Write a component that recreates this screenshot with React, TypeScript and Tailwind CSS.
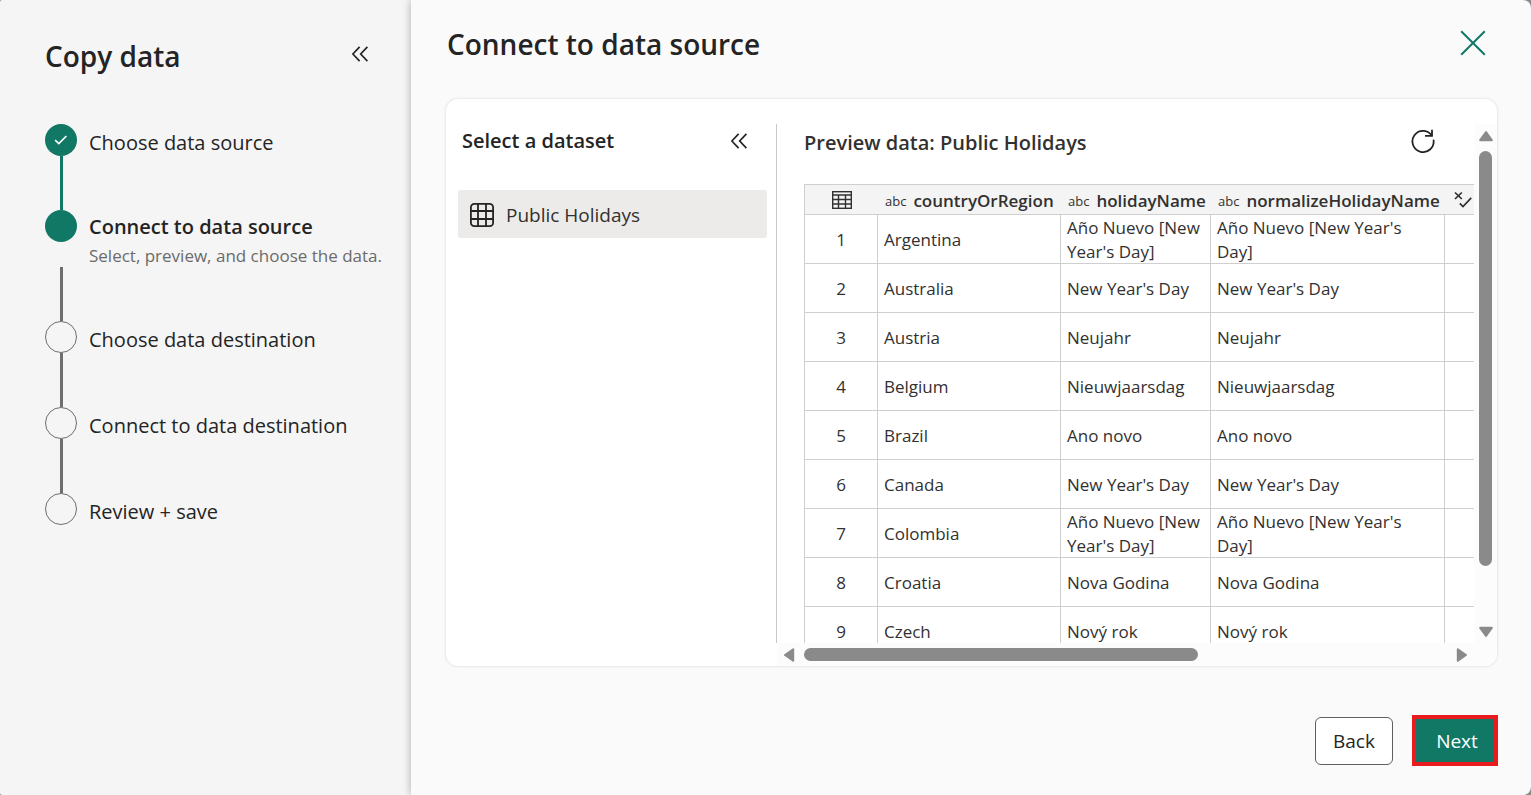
import React from "react";

type StepState = "done" | "current" | "todo";

const steps: { label: string; detail?: string; state: StepState }[] = [
  { label: "Choose data source", state: "done" },
  {
    label: "Connect to data source",
    detail: "Select, preview, and choose the data.",
    state: "current",
  },
  { label: "Choose data destination", state: "todo" },
  { label: "Connect to data destination", state: "todo" },
  { label: "Review + save", state: "todo" },
];

const rows: [string, string][] = [
  ["Argentina", "Año Nuevo [New Year's Day]"],
  ["Australia", "New Year's Day"],
  ["Austria", "Neujahr"],
  ["Belgium", "Nieuwjaarsdag"],
  ["Brazil", "Ano novo"],
  ["Canada", "New Year's Day"],
  ["Colombia", "Año Nuevo [New Year's Day]"],
  ["Croatia", "Nova Godina"],
  ["Czech", "Nový rok"],
];

function CollapseIcon() {
  return (
    <svg className="h-4 w-4" viewBox="0 0 16 16" fill="none" stroke="currentColor" strokeWidth="1.7">
      <path d="M7.6.9.9 8l6.7 7.1M15.4.9 8.7 8l6.7 7.1" />
    </svg>
  );
}

function DatasetIcon() {
  return (
    <svg className="h-6 w-6" viewBox="0 0 24 24" fill="none" stroke="#242424" strokeWidth="1.8">
      <rect x="0.9" y="0.9" width="22.2" height="22.2" rx="3.4" />
      <path d="M8 1v22M16 1v22M1 8h22M1 16h22" />
    </svg>
  );
}

function TableIcon() {
  return (
    <svg className="mx-auto h-[18px] w-5" viewBox="0 0 20 18" fill="none" stroke="currentColor">
      <rect x="0.7" y="0.7" width="18.6" height="16.6" strokeWidth="1.4" />
      <path d="M0 4h20M0 8.5h20M0 13h20M6.5 4v14M13.5 4v14" strokeWidth="1.4" />
    </svg>
  );
}

function RefreshIcon() {
  return (
    <svg className="h-6 w-6" viewBox="0 0 24 24" fill="none" stroke="currentColor" strokeWidth="1.8">
      <path d="M20.6 6.2A10.6 10.6 0 1 0 22.6 11.4" strokeLinecap="round" />
      <path d="M21 .8v6h-7" />
    </svg>
  );
}

function BooleanIcon() {
  return (
    <svg className="h-[18px] w-[18px]" viewBox="0 0 18 18" fill="none" stroke="currentColor" strokeWidth="1.7">
      <path d="M1 1.5 7.8 8M7.8 1.5 1 8M5.8 12.4l3.2 3.1 8.2-8.7" />
    </svg>
  );
}

function Arrow({ direction }: { direction: "up" | "down" | "left" | "right" }) {
  const turn = {
    up: "rotate-0",
    down: "rotate-180",
    left: "-rotate-90",
    right: "rotate-90",
  }[direction];
  return (
    <svg className={`h-[14px] w-[14px] shrink-0 ${turn}`} viewBox="0 0 14 14" fill="#8a8a8a" stroke="#8a8a8a" strokeWidth="2" strokeLinejoin="round">
      <path d="M7 3 12.8 11.2H1.2Z" />
    </svg>
  );
}

function StepMarker({ state }: { state: StepState }) {
  if (state === "todo") {
    return <span className="h-8 w-8 shrink-0 rounded-full border border-[#6e6e6e]" />;
  }
  return (
    <span className="flex h-8 w-8 shrink-0 items-center justify-center rounded-full bg-[#117865] text-white">
      {state === "done" && (
        <svg className="h-[10px] w-[14px]" viewBox="0 0 14 10" fill="none" stroke="currentColor" strokeWidth="1.6">
          <path d="M1.2 5.2 4.8 8.6 12.4 1" />
        </svg>
      )}
    </span>
  );
}

function Sidebar() {
  return (
    <aside className="w-[411px] shrink-0 bg-[#f5f5f5] pt-9 pl-[45px]">
      <div className="flex items-start justify-between pr-[43px]">
        <h1 className="text-[28px] leading-10 font-semibold">Copy data</h1>
        <button type="button" aria-label="Collapse steps" className="mt-[10px]">
          <CollapseIcon />
        </button>
      </div>
      <ol className="mt-12">
        {steps.map((step, index) => (
          <li key={step.label} className="flex gap-3">
            <div className="flex flex-col items-center">
              <StepMarker state={step.state} />
              {index < steps.length - 1 && (
                <span
                  className={`h-[54px] w-[3px] ${step.state === "done" ? "bg-[#117865]" : "bg-[#6e6e6e]"} ${step.detail ? "mt-[25px]" : ""}`}
                />
              )}
            </div>
            <div className="whitespace-nowrap">
              <p className={step.detail ? "pt-[1px] text-[20px] leading-8 font-semibold" : "pt-[3px] text-[20px] leading-8"}>
                {step.label}
              </p>
              {step.detail && <p className="pt-[1px] text-[17px] leading-6 text-[#6b6b6b]">{step.detail}</p>}
            </div>
          </li>
        ))}
      </ol>
    </aside>
  );
}

function PreviewTable() {
  const headers = ["countryOrRegion", "holidayName", "normalizeHolidayName"];
  return (
    <table className="w-[762px] table-fixed border-separate border-spacing-0 border-t border-l border-[#cfcfcf] text-left text-[17px] leading-6 text-[#323130]">
      <colgroup>
        <col className="w-[73px]" />
        <col className="w-[183px]" />
        <col className="w-[150px]" />
        <col className="w-[234px]" />
        <col />
      </colgroup>
      <thead>
        <tr className="h-[30px] bg-[#f4f4f4]">
          <th className="border-b border-[#cfcfcf] p-0" aria-label="Row">
            <TableIcon />
          </th>
          {headers.map((name) => (
            <th key={name} className="border-b border-[#cfcfcf] p-0 pt-[2px] pl-[7px] font-semibold whitespace-nowrap">
              <span className="mr-[7px] align-[1px] text-[13px] leading-4 font-normal">abc</span>
              {name}
            </th>
          ))}
          <th className="border-b border-[#cfcfcf] p-0 pl-[9px]" aria-label="True or false">
            <BooleanIcon />
          </th>
        </tr>
      </thead>
      <tbody>
        {rows.map(([country, holiday], index) => (
          <tr key={country} className="h-[49px] *:border-b *:border-[#cfcfcf] *:p-0 *:not-last:border-r">
            <td className="text-center">
              <div className="mt-[1px] -mb-[1px]">{index + 1}</div>
            </td>
            <td>
              <div className="mt-[1px] -mb-[1px] pl-[6px]">{country}</div>
            </td>
            <td>
              <div className="mt-[1px] -mb-[1px] pl-[6px]">{holiday}</div>
            </td>
            <td>
              <div className="mt-[1px] -mb-[1px] pr-6 pl-[6px]">{holiday}</div>
            </td>
            <td />
          </tr>
        ))}
      </tbody>
    </table>
  );
}

function DatasetPane() {
  return (
    <div className="flex w-[330px] shrink-0 flex-col pt-[26px] pr-[9px] pl-3">
      <div className="flex items-center justify-between pr-5 pl-1">
        <h3 className="text-[20px] leading-8 font-semibold">Select a dataset</h3>
        <button type="button" aria-label="Collapse datasets">
          <CollapseIcon />
        </button>
      </div>
      <button type="button" className="mt-[33px] flex h-12 items-center gap-3 rounded-[3px] bg-[#edebe9] pt-[2px] pl-3 text-[19px] text-[#323130]">
        <DatasetIcon />
        Public Holidays
      </button>
    </div>
  );
}

function PreviewPane() {
  return (
    <div className="mt-[25px] flex min-w-0 flex-1 flex-col">
      <div className="flex min-h-0 flex-1">
        <div className="min-w-0 flex-1 overflow-hidden border-l border-[#c8c8c8] pl-[27px]">
          <div className="flex items-start justify-between pr-[39px]">
            <h3 className="pt-[3px] text-[20px] leading-8 font-semibold text-[#323130]">Preview data: Public Holidays</h3>
            <button type="button" aria-label="Refresh preview" className="mt-[5px]">
              <RefreshIcon />
            </button>
          </div>
          <div className="mt-[25px]">
            <PreviewTable />
          </div>
        </div>
        <div className="flex w-[23px] shrink-0 flex-col items-center bg-[#fcfcfc] pt-[5px] pb-1">
          <Arrow direction="up" />
          <div className="mt-2 mb-[59px] w-[13px] flex-1 rounded-full bg-[#8a8a8a]" />
          <Arrow direction="down" />
        </div>
      </div>
      <div className="ml-[1px] flex h-[23px] shrink-0 items-center rounded-br-xl bg-[#fcfcfc] pr-7 pl-[5px]">
        <Arrow direction="left" />
        <div className="mr-[257px] ml-2 h-[13px] flex-1 rounded-full bg-[#8a8a8a]" />
        <Arrow direction="right" />
      </div>
    </div>
  );
}

export default function App() {
  return (
    <div className="h-screen bg-[#8a8a8a] font-['Open_Sans','Noto_Sans',sans-serif] text-[#242424]">
      <div className="flex h-full overflow-hidden rounded-l-[2px] rounded-r-lg">
        <Sidebar />
        <main className="z-10 flex min-w-0 flex-1 flex-col bg-[#fafafa] pt-6 pr-[33px] pb-[29px] pl-[35px] shadow-[0_0_8px_rgba(0,0,0,0.3)]">
          <header className="flex items-start justify-between pr-3 pl-[1px]">
            <h2 className="text-[28px] leading-10 font-semibold">Connect to data source</h2>
            <button type="button" aria-label="Close" className="mt-[6px] text-[#117865]">
              <svg className="h-[26px] w-[26px]" viewBox="0 0 26 26" fill="none" stroke="currentColor" strokeWidth="2">
                <path d="M1.2 1.2l23.6 23.6M24.8 1.2 1.2 24.8" />
              </svg>
            </button>
          </header>
          <section className="mt-[35px] mr-[1px] flex min-h-0 flex-1 rounded-xl bg-white shadow-[0_0_3px_rgba(0,0,0,0.16)]">
            <DatasetPane />
            <PreviewPane />
          </section>
          <footer className="mt-[49px] flex items-center justify-end gap-[19px] text-[19px]">
            <button type="button" className="h-12 w-[78px] rounded-md border border-[#5f5f5f] bg-white pt-[2px]">
              Back
            </button>
            <button type="button" className="h-[51px] w-[86px] border-4 border-[#e81b1e] bg-[#117865] pt-[2px] pl-1 text-white">
              Next
            </button>
          </footer>
        </main>
      </div>
    </div>
  );
}
